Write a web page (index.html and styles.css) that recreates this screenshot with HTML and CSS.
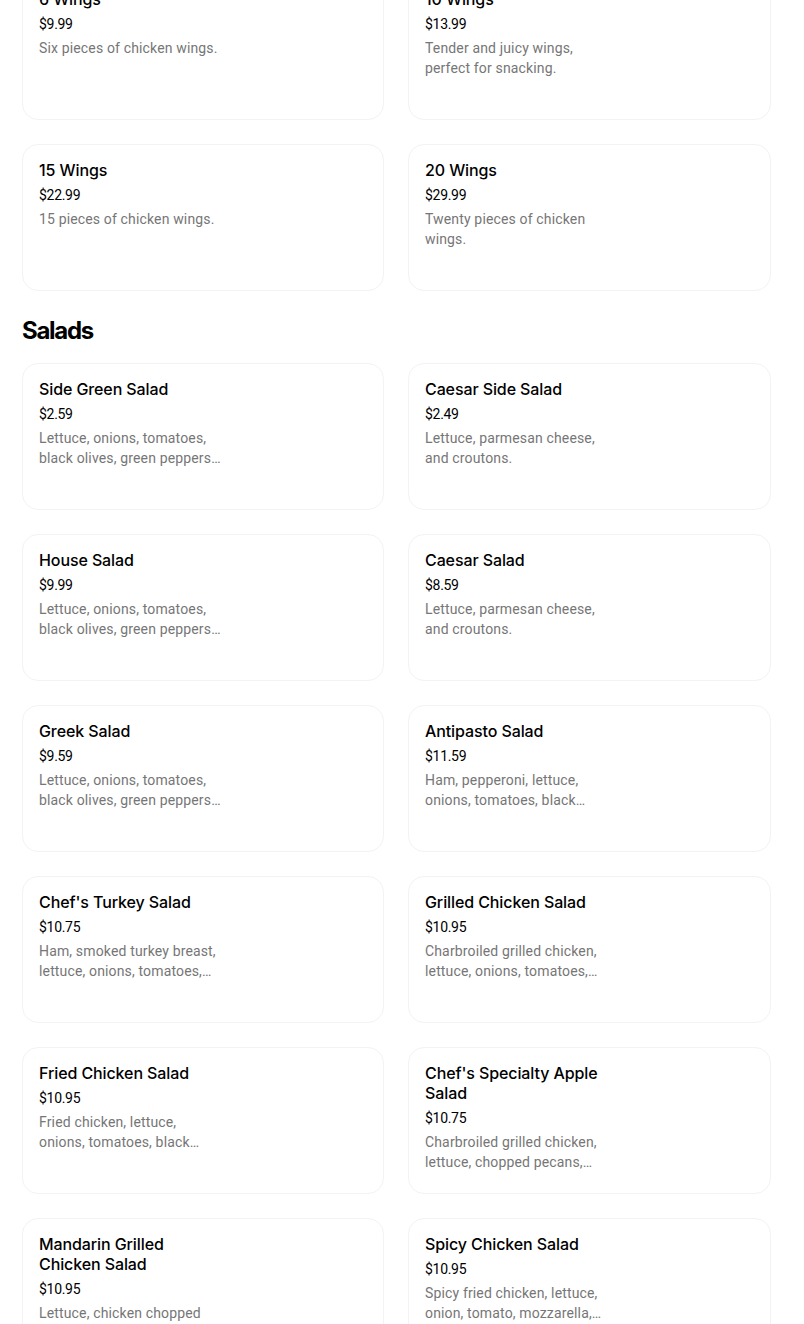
FILE: index.html
```html
<!DOCTYPE html>
<html>
<head>
<meta charset="utf-8">
<link rel="stylesheet" href="styles.css">
</head>
<body>
<main class="menu">
  <section class="section section-first">
    <div class="grid">
      <div class="card"><div class="info"><div class="title">6 Wings</div><div class="price">$9.99</div><div class="desc">Six pieces of chicken wings.</div></div></div>
      <div class="card"><div class="info"><div class="title">10 Wings</div><div class="price">$13.99</div><div class="desc">Tender and juicy wings, perfect for snacking.</div></div></div>
      <div class="card"><div class="info"><div class="title">15 Wings</div><div class="price">$22.99</div><div class="desc">15 pieces of chicken wings.</div></div></div>
      <div class="card"><div class="info"><div class="title">20 Wings</div><div class="price">$29.99</div><div class="desc">Twenty pieces of chicken wings.</div></div></div>
    </div>
  </section>
  <section class="section">
    <h2 class="section-title">Salads</h2>
    <div class="grid">
      <div class="card"><div class="info"><div class="title">Side Green Salad</div><div class="price">$2.59</div><div class="desc">Lettuce, onions, tomatoes, black olives, green peppers and cucumbers.</div></div></div>
      <div class="card"><div class="info"><div class="title">Caesar Side Salad</div><div class="price">$2.49</div><div class="desc">Lettuce, parmesan cheese, and croutons.</div></div></div>
      <div class="card"><div class="info"><div class="title">House Salad</div><div class="price">$9.99</div><div class="desc">Lettuce, onions, tomatoes, black olives, green peppers and cucumbers.</div></div></div>
      <div class="card"><div class="info"><div class="title">Caesar Salad</div><div class="price">$8.59</div><div class="desc">Lettuce, parmesan cheese, and croutons.</div></div></div>
      <div class="card"><div class="info"><div class="title">Greek Salad</div><div class="price">$9.59</div><div class="desc">Lettuce, onions, tomatoes, black olives, green peppers and feta cheese.</div></div></div>
      <div class="card"><div class="info"><div class="title">Antipasto Salad</div><div class="price">$11.59</div><div class="desc">Ham, pepperoni, lettuce, onions, tomatoes, black olives, and mozzarella cheese.</div></div></div>
      <div class="card"><div class="info"><div class="title">Chef's Turkey Salad</div><div class="price">$10.75</div><div class="desc">Ham, smoked turkey breast, lettuce, onions, tomatoes, black olives, and cheese.</div></div></div>
      <div class="card"><div class="info"><div class="title">Grilled Chicken Salad</div><div class="price">$10.95</div><div class="desc">Charbroiled grilled chicken, lettuce, onions, tomatoes, black olives, and cheese.</div></div></div>
      <div class="card"><div class="info"><div class="title">Fried Chicken Salad</div><div class="price">$10.95</div><div class="desc">Fried chicken, lettuce, onions, tomatoes, black olives, and cheese.</div></div></div>
      <div class="card"><div class="info"><div class="title">Chef's Specialty Apple Salad</div><div class="price">$10.75</div><div class="desc">Charbroiled grilled chicken, lettuce, chopped pecans, apples, and dried cranberries.</div></div></div>
      <div class="card"><div class="info"><div class="title">Mandarin Grilled Chicken Salad</div><div class="price">$10.95</div><div class="desc">Lettuce, chicken chopped pecans, mandarin oranges, and crispy noodles.</div></div></div>
      <div class="card"><div class="info"><div class="title">Spicy Chicken Salad</div><div class="price">$10.95</div><div class="desc">Spicy fried chicken, lettuce, onion, tomato, mozzarella, and ranch.</div></div></div>
    </div>
  </section>
</main>
</body>
</html>
```

FILE: styles.css
```css
html, body {
  margin: 0;
  padding: 0;
  background: #ffffff;
}

body {
  font-family: Inter, "Liberation Sans", sans-serif;
  color: #000000;
}

.menu {
  width: 749px;
  padding-left: 22px;
}

.section-first {
  margin-top: -27px;
}

.section-title {
  margin: 24px 0 16px;
  font-size: 24px;
  line-height: 32px;
  font-weight: 700;
  letter-spacing: -1.3px;
}

.grid {
  display: grid;
  grid-template-columns: 362px 1fr;
  gap: 24px;
}

.card {
  box-sizing: border-box;
  height: 147px;
  border: 1px solid #f3f3f3;
  border-radius: 16px;
  padding: 15px 16px;
}

.info {
  width: 185px;
}

.title {
  font-size: 16px;
  line-height: 20px;
  font-weight: 500;
  letter-spacing: -0.1px;
}

.price {
  margin-top: 5px;
  font-family: Roboto, "Liberation Sans", sans-serif;
  font-size: 14px;
  line-height: 20px;
  letter-spacing: -0.3px;
}

.desc {
  margin-top: 4px;
  font-family: Roboto, "Liberation Sans", sans-serif;
  font-size: 14px;
  line-height: 20px;
  letter-spacing: 0.15px;
  color: #767676;
  display: -webkit-box;
  -webkit-line-clamp: 2;
  -webkit-box-orient: vertical;
  overflow: hidden;
}
```
